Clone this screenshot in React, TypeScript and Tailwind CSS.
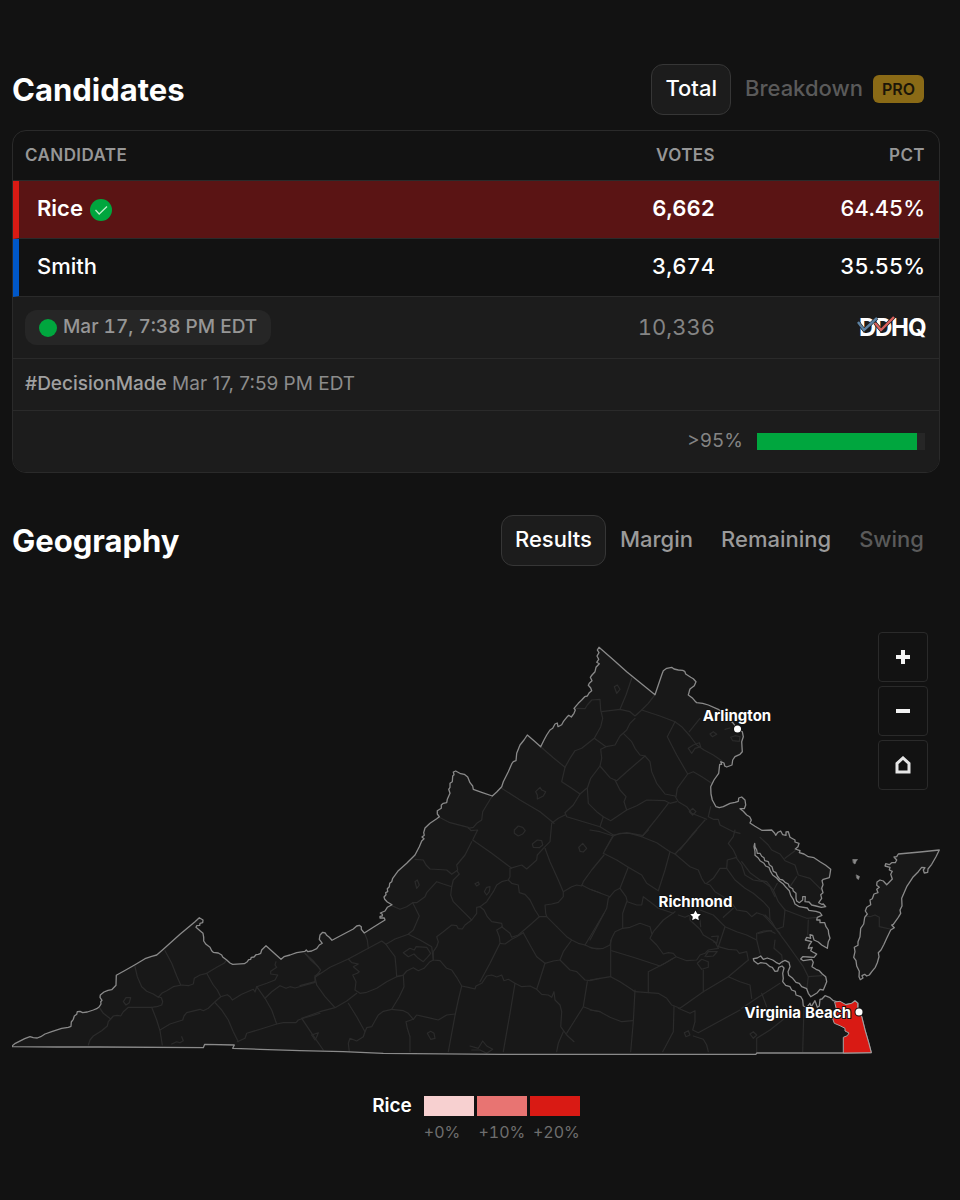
import React from "react";

type Sheet = [number, number, string];

// Map lines are recorded on survey sheets: an origin plus points at three units per map unit.
const place = ([ox, oy, pts]: Sheet): string =>
  pts
    .trim()
    .split(/\s+/)
    .map((p) => {
      const [x, y] = p.split(",").map(Number);
      return `${(ox + x / 3).toFixed(1)},${(oy + y / 3).toFixed(1)}`;
    })
    .join(" ");

const OUTLINE: Sheet[] = [
  [0, 820, "36,678 46,670 58,664 74,656 90,650 100,653 112,654 122,650 135,642 155,635 185,625 205,622 213,619 214,606 220,598 223,588 230,583 232,575 240,574 248,578 262,576 280,570 290,566 298,560 303,552 302,545 306,541 300,532 301,525 312,516 324,511 335,509 348,496 349,466 372,453 405,434 435,416 455,409 470,405 490,388 540,343 585,305 598,293 609,300 608,308 600,310 599,316 590,317 588,322 600,332 609,340 611,352 611,363 618,373 630,382 635,392 640,397 655,399 665,405 668,411 680,420 690,429 698,433 733,431 742,425 746,419 752,418 754,412 762,411 768,404 775,403 782,400 785,390 798,377 808,386 843,418 852,410 870,405 890,398 915,394 919,390 923,395 935,393"],
  [300, 740, "35,633 50,626 58,615 67,610 58,598 60,585 68,577 76,579 80,586 88,592 96,601 130,583 160,567 170,558 178,556 184,560 184,568 193,579 220,562 245,546 255,540 253,534 240,534 240,529 247,528 247,523 241,519 255,513 262,502 276,494 262,486 254,478 252,471 258,464 257,458 263,455 262,446 268,440 269,430 275,425 278,415 295,392 320,370 345,345 358,320 365,303 372,296 366,291 373,286 371,278 375,264 390,250 410,236 418,230 412,222 412,212 424,205 424,195 430,190 440,188 442,178 450,160 446,148 450,142 450,130 457,125 458,108 462,104 460,96 467,93 482,101 493,103 503,111 510,128 518,138 520,148 545,157 577,168 590,156 605,140 610,125 625,95 636,70 640,65 648,62 650,40 660,15 672,0"],
  [500, 630, "82,315 102,332 122,350 132,330 140,315 150,300 158,295 165,282 172,279 174,290 185,284 190,275 202,260 206,256 214,261 222,250 226,240 222,235 235,220 245,210 254,200 262,198 268,188 275,182 272,174 265,166 268,160 276,152 271,142 276,135 285,125 288,112 298,101 290,97 296,88 291,78 297,68 292,60 297,52 340,89 380,125 430,166 465,194 475,165 485,135 490,122 500,115 515,112 522,117 535,120 548,121 554,124 557,132 572,142 580,146 588,155 583,167 570,177 568,184 565,195 578,205 584,212 590,218 608,220 625,225 655,238"],
  [680, 640, "125,215 135,225 160,250 175,268 187,275 190,290 185,305 187,335 180,343 165,350 158,360 156,375 140,381 134,378 132,369 122,365 125,373 119,373 116,400 102,420 92,440 93,462 97,480 108,500 118,503 130,500 150,490 165,487 175,484 176,474 185,471 195,480 197,495 193,506 180,506 190,514 200,525 209,530 214,540 210,549 225,559 245,571 275,570 284,580 287,586 293,577 302,573 308,584 318,586 318,576 325,575 330,592 345,600 345,606 357,610 354,620 346,627 360,632"],
  [740, 830, "180,62 178,68 192,72 205,80 222,83 240,95 257,106 272,118 270,132 268,143 250,148 246,152 249,164 245,175 249,188 242,194 245,205 236,218 245,223 250,222 257,230 244,232 228,228 215,225 207,216 195,215 196,200 188,200 188,210 178,218 170,213 168,205 168,190 160,183 158,176 148,170 145,162 135,157 128,150 120,148 112,138 108,128 100,124 96,110 88,104 85,95 74,92 72,83 65,79 60,70 52,70 50,60 45,50 44,40 42,50 45,64 45,76 55,84 60,92 72,100 77,108 87,112 92,125 98,135 110,144 118,153 130,162 138,172 148,182 152,196 160,208 165,222 178,230 202,234 207,241 228,244 240,248 246,256 232,262 230,270 240,270 240,278 254,278 258,290 265,300 266,312 270,325 265,335 262,355 245,345 235,336 222,330 218,316 210,314 212,325 200,322 196,330 215,335 208,345 205,355 217,352 212,362 222,368 230,372 222,382 205,381 188,380 182,387 190,392 215,388 220,397 216,410 228,418 238,422 247,432 257,440 260,455 250,480 240,478 232,488 212,500 205,490 200,476 185,470 178,460 168,457 158,445 146,436 144,425 150,410 147,397 135,391 125,396 118,402 108,397 98,390 82,384 70,388 62,378 52,384 40,386 42,393 54,402 62,398 78,400 90,410 97,412 105,424 113,423 116,412 126,408 132,414 128,430 130,445 128,455 137,466 150,470 155,480 166,484 168,495 182,500 188,510 190,528 200,532 210,520 214,530 225,512 232,532 238,528 240,508 246,507 255,497 270,503 280,512 300,518 315,524 335,520 345,512 354,520 354,538 365,560 375,600 386,638 394,668 310,669 190,669 50,669 48,673 0,673"],
  [300, 740, "880,943 600,943 250,940 130,935 0,932"],
  [0, 820, "780,688 698,685 703,675 614,673 610,683 300,681 170,681 36,680"],
];

const SHORE: Sheet = [740, 830, "598,60 540,66 475,72 470,80 462,81 470,90 466,98 455,98 448,104 437,101 435,108 450,112 448,120 457,124 452,133 457,147 446,158 440,164 430,153 420,150 411,156 410,166 418,172 410,178 414,188 402,192 397,206 390,210 392,224 380,232 376,243 382,252 374,262 371,282 362,295 360,320 354,335 354,346 343,352 345,365 341,382 348,392 350,408 358,424 357,440 361,449 369,444 366,437 374,433 380,438 388,435 396,424 406,412 412,398 417,380 415,368 423,360 432,343 440,325 452,300 463,293 455,285 460,283 475,262 482,250 480,240 486,228 485,205 500,170 512,152 520,140 535,125 545,112 555,113 550,120 553,129 563,127 564,117 575,103 588,80"];

const WINNER: Sheet = [740, 830, "285,516 300,514 318,524 335,520 345,513 353,520 353,538 365,560 375,600 386,638 394,668 310,669 310,622 322,617 327,609 315,603 315,595 300,587 283,580 278,566 290,545"];

const COUNTIES: Sheet[] = [
  [0, 820, "300,565 310,580 332,597 325,605 322,618 305,632 280,648 270,660 265,675"],
  [0, 820, "332,597 340,588 352,586 362,588 370,575 385,562 455,562 470,560 485,555 488,545 484,533 475,530"],
  [0, 820, "405,440 412,470 425,500 440,514 460,522 475,532 485,520 500,512 520,500 545,495 565,497 580,492 583,475 600,465 620,460 650,442 672,430 680,420"],
  [0, 820, "495,392 515,430 530,468 542,495"],
  [0, 820, "455,562 470,600 480,632 487,675"],
  [0, 820, "480,630 510,612 548,600 552,588 560,578 600,568 610,572 625,565 645,545 662,530 682,524 690,530 697,540 725,523 760,508 765,516 770,500 800,490 825,480 833,465 812,462 812,454 830,442 825,435 828,425"],
  [0, 820, "620,460 640,495 652,510 662,530"],
  [0, 820, "645,548 665,570 685,600 700,635 715,665"],
  [0, 820, "770,500 795,535 815,570 830,612"],
  [0, 820, "712,665 735,655 740,640 790,625 830,612 850,608 888,608 895,600 910,595 960,580"],
  [0, 820, "795,535 815,515 840,497 858,505 870,500 885,504 945,487"],
  [0, 820, "370,545 378,533 392,533 388,548 378,555 370,545"],
  [0, 820, "515,672 530,665 540,668 550,662 545,650"],
  [0, 820, "915,400 932,420 955,440"],
  [0, 820, "960,460 945,467 945,487"],
  [300, 740, "15,640 40,663 62,690 45,712 50,735 75,770 105,803 140,783 170,760"],
  [300, 740, "0,737 45,725"],
  [300, 740, "45,712 90,682 145,657 205,625 245,603 258,613"],
  [300, 740, "195,583 202,600 205,625"],
  [300, 740, "145,657 155,668 175,672 160,680 178,695 172,700 158,705 168,725 165,750 180,760 200,757 230,745 260,725 290,710 310,705 320,693 340,683 355,692 372,685 390,665 400,660"],
  [300, 740, "258,613 270,630 285,650 288,680 290,710 308,706"],
  [300, 740, "310,705 312,740 298,770 275,808 250,814 235,825 225,842 215,860 200,863 195,875 190,890 170,903 150,895 145,910 148,935"],
  [300, 740, "145,790 170,830 195,875"],
  [300, 740, "105,803 60,815 5,835 35,880 70,930"],
  [300, 740, "275,808 310,812 325,820 340,838 350,825 385,833 415,840 440,825 466,822"],
  [300, 740, "340,838 318,845 322,865 330,890 330,935"],
  [300, 740, "258,613 285,597 325,583 360,600 395,620 400,660"],
  [300, 740, "325,583 340,570 358,528 350,512 338,488 350,488 375,470 380,458 410,425 430,432 455,440"],
  [300, 740, "276,497 300,508 320,500 338,488"],
  [300, 740, "345,358 370,360 378,375 390,387 440,390 455,403 473,390 470,375 495,345 515,305"],
  [300, 740, "416,231 450,248 505,262 513,272 533,270 528,280 518,300 575,340 635,385"],
  [300, 740, "577,168 560,195 548,215 545,240 530,250 520,262 505,265"],
  [300, 740, "605,145 660,180 720,215 762,250"],
  [300, 740, "470,392 478,402 460,420 455,440 452,465 460,485 490,515 515,540 495,555 487,567 475,566 470,557 455,555 430,575 410,590 415,605 410,620 400,635 400,660 420,662 440,685 455,690 470,712 485,738 505,742 525,747 528,738 545,730 560,708 575,705 590,711 605,705 612,722 625,718 645,730 665,740 690,738 710,748 725,763 745,765 755,772 762,755 765,780 780,795 785,815 782,860 800,885 822,905"],
  [300, 740, "515,540 530,520 530,502 540,500 552,510 562,530 575,545 605,550 607,560 590,570 598,590 600,610 570,670 540,725"],
  [300, 740, "540,500 560,485 580,455 590,435 605,425 625,420 630,410 630,385 665,375 680,387 710,360 712,345 735,320 750,305 755,250 775,235 795,225"],
  [300, 740, "625,420 635,430 655,435 658,458 675,463 690,480 705,510 718,530 690,555 655,585 635,592 630,580 605,560"],
  [300, 740, "735,325 750,365 775,420 790,455 790,470 775,487 755,492 735,495 737,520 740,530 718,530"],
  [300, 740, "790,455 815,440 830,435 845,438 850,425 875,390 912,345"],
  [300, 740, "845,435 870,448 900,458"],
  [300, 740, "740,530 770,560 800,590 815,600 835,610 855,615 870,590 912,520"],
  [300, 740, "855,615 875,624 900,626"],
  [300, 740, "670,578 690,615 710,650 735,670 760,663 780,660 790,635 815,600"],
  [300, 740, "735,670 722,710 710,748"],
  [300, 740, "780,660 810,690 830,695 855,720 870,722 900,715"],
  [300, 740, "862,725 850,800 825,840 800,880"],
  [300, 740, "850,800 875,810 900,815"],
  [300, 740, "600,610 615,612 635,598 650,590 670,578"],
  [300, 740, "485,738 475,780 466,822 455,880 445,935"],
  [300, 740, "645,730 630,820 610,935"],
  [300, 740, "790,875 775,910 770,935"],
  [300, 740, "345,425 352,420 358,435 350,445 345,425"],
  [300, 740, "707,155 720,142 725,150 737,155 730,168 712,177 712,165 707,155"],
  [300, 740, "643,270 655,258 668,262 676,272 668,282 655,288 643,280 643,270"],
  [300, 740, "697,312 712,300 725,302 728,315 718,323 700,322 697,312"],
  [300, 740, "836,322 848,310 860,325 850,336 840,334 836,322"],
  [300, 740, "525,431 535,426 538,433 530,438 525,431"],
  [300, 740, "553,455 560,442 570,440 568,455 560,465 553,455"],
  [300, 740, "310,638 330,625 343,630 348,620 380,622 392,640 382,652 370,665 355,655 342,642 325,650 310,638"],
  [300, 740, "382,880 392,874 402,880 405,895 392,898 382,880"],
  [300, 740, "510,918 535,925 548,903 560,918 578,928 560,940 540,930 515,930"],
  [300, 740, "35,885 55,878 50,890 45,900 35,885"],
  [500, 630, "122,350 160,383 195,412"],
  [500, 630, "225,235 255,236 262,225 275,210 300,208 302,240 308,265 302,290 283,325 245,355 225,362 210,385 195,412 185,455 215,475 240,492 260,475"],
  [500, 630, "305,245 360,238 390,245 405,258 425,240 445,220 465,194"],
  [500, 630, "395,145 378,195 360,238"],
  [500, 630, "283,325 318,350 345,345 360,318 380,300 390,280 405,265"],
  [500, 630, "425,240 480,258 525,275 545,290 570,318 590,345 612,360 640,375 665,392"],
  [500, 630, "370,310 395,335 405,355 420,375 435,378 450,395 455,425 470,460 495,492 525,498 535,515 560,530 575,550 620,568"],
  [500, 630, "318,350 302,358 305,385 300,408 330,443 350,452 380,425 435,378"],
  [500, 630, "300,408 272,445 262,475 265,520 290,545 310,560 332,572 380,540 372,515 378,500 360,480 345,450"],
  [500, 630, "380,540 410,527 440,510 495,512 510,520 530,515"],
  [500, 630, "525,275 515,295 502,320 530,375 563,432 580,425 608,442 635,460"],
  [500, 630, "563,432 532,475 528,500"],
  [500, 630, "600,265 568,305"],
  [500, 630, "240,492 220,525 195,548 200,560 300,590 340,615"],
  [500, 630, "300,590 310,560"],
  [500, 630, "505,520 470,565 430,615"],
  [500, 630, "315,660 340,615 380,608 430,617"],
  [500, 630, "615,570 575,615 540,660"],
  [500, 630, "632,530 625,560 640,568 655,568 660,585 700,605 720,610"],
  [500, 630, "343,170 352,165 360,178 350,190 343,170"],
  [500, 630, "565,355 580,345 598,338 602,350 585,355 575,370 565,355"],
  [500, 630, "630,312 640,305 650,313 637,320 630,312"],
  [500, 630, "568,545 578,535 588,545 578,555 568,545"],
  [680, 640, "152,292 165,287 180,290 178,304 158,302 152,292"],
  [680, 640, "135,268 150,264"],
  [590, 830, "70,18 90,10 120,10 155,20 200,38 240,65 255,72 290,35 320,0"],
  [590, 830, "155,20 175,0"],
  [590, 830, "0,0 30,5 70,18 40,70"],
  [590, 830, "40,70 80,90 115,112 155,135 170,160 205,182"],
  [590, 830, "240,65 225,120 205,182"],
  [590, 830, "115,112 90,175 108,200 112,215 140,225 155,225 160,200 180,215 205,235 250,250"],
  [590, 830, "90,175 75,182 55,205 50,235 0,330"],
  [590, 830, "0,178 60,200"],
  [590, 830, "110,215 98,250 98,295 75,305 65,325 60,345 40,355 20,357 0,352"],
  [590, 830, "98,295 120,292 150,280 180,290 185,310"],
  [590, 830, "65,362 130,382 210,408 250,385"],
  [590, 830, "62,330 62,440 90,455 120,475 135,485 205,490 230,505 245,525 270,535 340,485 415,440 475,390"],
  [590, 830, "62,440 30,445 0,450"],
  [590, 830, "255,245 220,270 190,305 180,325 200,345 220,372 235,368 250,370 258,380 290,392 320,390 330,375 345,370 355,360 385,355"],
  [590, 830, "258,380 225,400 175,425 175,488"],
  [590, 830, "135,480 130,575 122,665"],
  [590, 830, "0,540 30,545 60,562 95,575 128,572"],
  [590, 830, "322,400 335,388 355,395 355,412 335,418 322,400"],
  [590, 830, "340,420 340,485"],
  [590, 830, "252,530 250,605 218,665"],
  [590, 830, "265,535 300,550 315,542 315,575 308,600 325,608 450,540"],
  [590, 830, "310,618 340,628 350,645 355,665"],
  [590, 830, "255,72 300,110 325,120 335,145 345,160 360,165 375,185 400,200 430,225 440,240 470,245 485,260 500,248 520,255 530,265 570,310"],
  [590, 830, "350,160 370,145 390,115 410,115 435,150 465,175 490,190 520,215 538,235 540,270"],
  [590, 830, "410,115 412,90 440,82 430,60 415,40 430,20 435,0"],
  [590, 830, "440,85 455,105 465,135 490,150 520,155 540,170 555,200"],
  [590, 830, "300,250 300,270 330,298 340,315 375,335 385,355"],
  [590, 830, "265,255 285,262 300,255 330,270 332,290"],
  [590, 830, "330,240 370,255 405,290 440,305 470,315 500,330 510,370"],
  [590, 830, "400,262 430,235"],
  [590, 830, "405,290 395,320 385,350 415,358 440,360 448,370 470,365 475,390"],
  [590, 830, "365,320 385,318 380,340 370,335"],
  [590, 830, "345,380 355,365 382,365 370,378 350,380"],
  [590, 830, "415,440 450,455 480,465 485,505"],
  [590, 830, "500,330 500,310 520,303 545,302"],
  [590, 830, "455,535 500,505 570,460"],
  [590, 830, "515,490 530,530"],
  [590, 830, "283,608 295,602 300,615 288,620 283,608"],
  [590, 830, "500,665 500,625 540,600 590,560"],
  [590, 830, "480,612 490,605 500,615 490,625 480,612"],
  [740, 830, "5,95 30,128 60,150 80,155 100,180 115,215 135,240"],
  [740, 830, "60,22 85,45 95,60 120,72 135,92 165,105 175,135 210,145 225,160 245,180"],
  [740, 830, "135,85 165,62"],
  [740, 830, "170,140 150,170"],
  [740, 830, "100,182 112,160"],
  [740, 830, "135,240 130,290 110,298"],
  [740, 830, "135,240 200,265 232,262"],
  [740, 830, "205,270 203,315"],
  [740, 830, "75,255 95,275 110,300 140,340 165,375 190,410 205,440 245,437"],
  [740, 830, "205,440 200,480"],
  [740, 830, "55,310 90,302 105,310"],
  [740, 830, "105,330 102,355 125,375 128,400"],
  [740, 830, "375,258 390,260 405,255 418,262 418,290 450,297"],
  [740, 830, "192,535 190,600 188,665"],
];

const outline = OUTLINE.map(place).join(" ");

function VirginiaMap() {
  return (
    <svg
      viewBox="12 630 928 430"
      className="block w-full"
      role="img"
      aria-label="Map of Virginia results"
      strokeLinejoin="round"
      strokeLinecap="round"
    >
      <g fill="#181818" stroke="none">
        <polygon points={outline} />
        <polygon points={place(SHORE)} />
      </g>
      <g fill="none" stroke="#2b2b2b" strokeWidth="1.2">
        {COUNTIES.map((c, i) => (
          <polyline key={i} points={place(c)} />
        ))}
      </g>
      <g fill="none" stroke="#8a8a8a" strokeWidth="1.3">
        <polygon points={outline} />
        <polygon points={place(SHORE)} />
        <path d="M853 859.5h4.5l-1.5 2-1 2.5-1.5-1zM856.5 875l3 1.500-1 3-1.500-1z" fill="#8a8a8a" strokeWidth="0.6" />
      </g>
      <polygon points={place(WINNER)} fill="#d91a14" stroke="#a3a3a3" strokeWidth="1" />
      <g
        className="font-['Inter',sans-serif] text-[15px] font-bold"
        fill="#fff"
        stroke="#121212"
        strokeWidth="2"
        paintOrder="stroke"
      >
        <circle cx="737.500" cy="729" r="3.500" />
        <text x="737" y="721" textAnchor="middle">Arlington</text>
        <path d="M695.500 910.500l1.700 3.200 3.600.5-2.600 2.500.6 3.600-3.300-1.700-3.300 1.700.6-3.600-2.600-2.500 3.600-.5z" />
        <text x="695.500" y="907" textAnchor="middle">Richmond</text>
        <circle cx="859" cy="1012" r="3.500" />
        <text x="851" y="1018" textAnchor="end">Virginia Beach</text>
      </g>
    </svg>
  );
}

function DdhqLogo() {
  return (
    <svg width="70" height="34" viewBox="0 0 70 34" role="img" aria-label="DDHQ" className="block">
      <g className="font-['Inter',sans-serif] text-[24px] font-bold" fill="#fff">
        <text x="2" y="25">D</text>
        <text x="18" y="25">D</text>
        <text x="34" y="25">H</text>
        <text x="51" y="25">Q</text>
      </g>
      <path d="M1 11l6 8 13-12" fill="none" stroke="#1c1c1c" strokeWidth="3.600" />
      <path d="M18 12l6 7 13-13" fill="none" stroke="#1c1c1c" strokeWidth="3.600" />
      <path d="M1 11l6 8 13-12" fill="none" stroke="#5c82a3" strokeWidth="2.400" />
      <path d="M18 12l6 7 13-13" fill="none" stroke="#d9605c" strokeWidth="2.400" />
    </svg>
  );
}

function Tab({ label, active, dim, pro }: { label: string; active?: boolean; dim?: boolean; pro?: boolean }) {
  const look = active
    ? "border-[#363636] bg-[#1c1c1c] text-white"
    : dim
      ? "border-transparent text-[#5a5a5a]"
      : "border-transparent text-[#9a9a9a]";
  return (
    <button
      type="button"
      role="tab"
      aria-selected={!!active}
      className={`flex h-[51px] items-center gap-2.5 rounded-xl border px-[13px] pb-0.5 text-[22px] font-medium whitespace-nowrap ${look}`}
    >
      {label}
      {pro && (
        <span className="flex h-7 items-center rounded-md bg-[#8a6a16] px-[9px] text-base font-semibold text-[#1c1608]">
          PRO
        </span>
      )}
    </button>
  );
}

const candidates = [
  { name: "Rice", votes: "6,662", pct: "64.45%", winner: true },
  { name: "Smith", votes: "3,674", pct: "35.55%", winner: false },
];

const legend = [
  { label: "+0%", box: "bg-[#f7d0d0]", align: "justify-start" },
  { label: "+10%", box: "bg-[#e87472]", align: "justify-center" },
  { label: "+20%", box: "bg-[#d91a14]", align: "justify-end" },
];

const ruled = "[&>*]:border-b [&>*]:border-b-[#2a2a2a]";
const control = "flex h-[50px] w-[50px] items-center justify-center rounded-sm border border-[#2a2a2a] bg-[#121212]";

export default function App() {
  return (
    <main className="min-h-screen bg-[#121212] pt-16 pr-5 pb-12 pl-3 font-['Inter',sans-serif] text-white tabular-nums">
      <section>
        <div className="mb-[15px] flex items-center justify-between">
          <h2 className="text-[31px] leading-10 font-bold">Candidates</h2>
          <div role="tablist" className="mr-0.5 flex">
            <Tab label="Total" active />
            <Tab label="Breakdown" dim pro />
          </div>
        </div>

        <div className="overflow-hidden rounded-[14px] border border-[#2a2a2a]">
          <table className="w-full table-fixed border-separate border-spacing-0">
            <colgroup>
              <col />
              <col className="w-[209px]" />
              <col className="w-[209px]" />
            </colgroup>
            <thead>
              <tr className={`h-[50px] text-[17px] tracking-wide text-[#969696] ${ruled}`}>
                <th className="pl-3 text-left font-semibold">CANDIDATE</th>
                <th className="pr-[15px] text-right font-semibold">VOTES</th>
                <th className="pr-[14px] text-right font-semibold">PCT</th>
              </tr>
            </thead>
            <tbody>
              {candidates.map((c) => (
                <tr key={c.name} className={`h-[58px] text-[22px] ${ruled} ${c.winner ? "bg-[#5a1414]" : ""}`}>
                  <td className={`border-l-[6px] pb-0.5 pl-[18px] ${c.winner ? "border-l-[#d91a14] font-semibold" : "border-l-[#0057c8] font-medium"}`}>
                    <span className="flex items-center gap-[7px]">
                      {c.name}
                      {c.winner && (
                        <svg width="22" height="22" viewBox="0 0 22 22" role="img" aria-label="Winner" className="mt-0.5">
                          <circle cx="11" cy="11" r="11" fill="#00a63e" />
                          <path d="M5.500 11l3.700 4L17 7.500" fill="none" stroke="#b9efc8" strokeWidth="1.300" />
                        </svg>
                      )}
                    </span>
                  </td>
                  <td className={`pr-[15px] pb-0.5 text-right ${c.winner ? "font-semibold" : "font-medium"}`}>{c.votes}</td>
                  <td className="pr-[14px] pb-0.5 text-right font-medium">{c.pct}</td>
                </tr>
              ))}
              <tr className={`h-[62px] bg-[#1c1c1c] text-[#969696] ${ruled}`}>
                <td className="pl-3">
                  <span className="flex h-[35px] w-fit items-center gap-1.5 rounded-xl bg-[#262626] px-[14px] text-[19px] font-medium">
                    <span className="size-[18px] rounded-full bg-[#00a63e]" />
                    Mar 17, 7:38 PM EDT
                  </span>
                </td>
                <td className="pr-[15px] text-right text-[22px] text-[#848484]">10,336</td>
                <td className="pr-3">
                  <span className="flex justify-end">
                    <DdhqLogo />
                  </span>
                </td>
              </tr>
              <tr className={`h-[52px] bg-[#1c1c1c] text-[19px] text-[#8c8c8c] proportional-nums ${ruled}`}>
                <td colSpan={3} className="pl-3">
                  <span className="font-medium text-[#a0a0a0]">#DecisionMade</span> Mar 17, 7:59 PM EDT
                </td>
              </tr>
              <tr className="h-[61px] bg-[#1c1c1c]">
                <td colSpan={3} className="pr-[14px]">
                  <div className="flex items-center justify-end gap-[14px] text-[19px] text-[#848484]">
                    <span>&gt;95%</span>
                    <div className="h-[17px] w-[168px] bg-[#262626]">
                      <div className="h-full bg-[#00a63e]" style={{ width: "95%" }} />
                    </div>
                  </div>
                </td>
              </tr>
            </tbody>
          </table>
        </div>
      </section>

      <section className="mt-[42px]">
        <div className="flex items-center justify-between">
          <h2 className="text-[31px] leading-10 font-bold">Geography</h2>
          <div role="tablist" className="mr-0.5 flex">
            <Tab label="Results" active />
            <Tab label="Margin" />
            <Tab label="Remaining" />
            <Tab label="Swing" dim />
          </div>
        </div>

        <div className="relative mt-16">
          <VirginiaMap />
          <div className="absolute top-0.5 right-3 flex flex-col gap-1">
            <button type="button" aria-label="Zoom in" className={control}>
              <svg width="14" height="14" viewBox="0 0 14 14">
                <path d="M7 0v14M0 7h14" stroke="#f2f2f2" strokeWidth="4" />
              </svg>
            </button>
            <button type="button" aria-label="Zoom out" className={control}>
              <svg width="14" height="14" viewBox="0 0 14 14">
                <path d="M0 7h14" stroke="#f2f2f2" strokeWidth="4" />
              </svg>
            </button>
            <button type="button" aria-label="Reset view" className={control}>
              <svg width="16" height="18" viewBox="0 0 16 18">
                <path d="M2 16V7.500L8 2l6 5.500V16z" fill="none" stroke="#e6e6e6" strokeWidth="3" />
              </svg>
            </button>
          </div>
        </div>

        <div className="mt-9 flex justify-center gap-3">
          <span className="text-[19px] leading-5 font-semibold">Rice</span>
          <div className="grid grid-cols-3 gap-x-[3px]">
            {legend.map((l) => (
              <div key={l.label} className="w-[50px]">
                <div className={`h-5 ${l.box}`} />
                <div className={`mt-1.5 flex text-base leading-5 text-[#6e6e6e] ${l.align}`}>{l.label}</div>
              </div>
            ))}
          </div>
        </div>
      </section>
    </main>
  );
}
